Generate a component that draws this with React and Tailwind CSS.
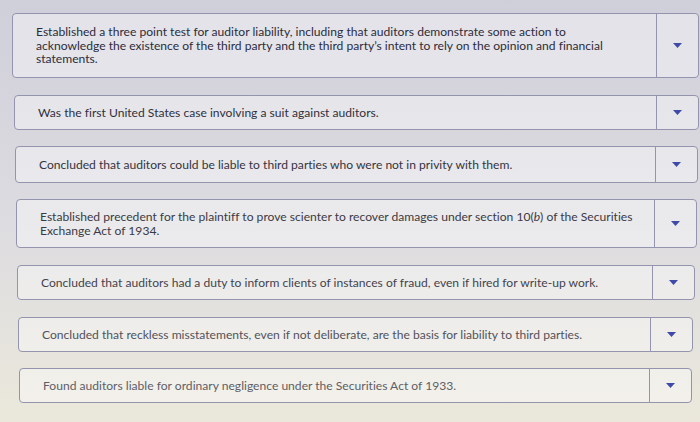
import React from 'react';

const rows = [
  {
    lines: [
      'Established a three point test for auditor liability, including that auditors demonstrate some action to',
      'acknowledge the existence of the third party and the third party\u2019s intent to rely on the opinion and financial',
      'statements.',
    ],
    box: 'ml-[12px] mr-[1px] h-[65px] mt-[13px]',
    tone: 'text-[#2c2c3b]',
  },
  { lines: ['Was the first United States case involving a suit against auditors.'], box: 'ml-[14px] mr-[1px] h-[35px] mt-[17px]', tone: 'text-[#30303d]' },
  { lines: ['Concluded that auditors could be liable to third parties who were not in privity with them.'], box: 'ml-[15px] mr-[2px] h-[37px] mt-[16px]', tone: 'text-[#343440]' },
  {
    lines: [
      <>Established precedent for the plaintiff to prove scienter to recover damages under section 10(<i>b</i>) of the Securities</>,
      'Exchange Act of 1934.',
    ],
    box: 'ml-[16px] mr-[3px] h-[49px] mt-[16px]',
    tone: 'text-[#3a3a44]',
  },
  { lines: ['Concluded that auditors had a duty to inform clients of instances of fraud, even if hired for write-up work.'], box: 'ml-[17px] mr-[5px] h-[35px] mt-[17px]', tone: 'text-[#43434c]' },
  { lines: ['Concluded that reckless misstatements, even if not deliberate, are the basis for liability to third parties.'], box: 'ml-[18px] mr-[7px] h-[35px] mt-[17px]', tone: 'text-[#52525a]' },
  { lines: ['Found auditors liable for ordinary negligence under the Securities Act of 1933.'], box: 'ml-[19px] mr-[8px] h-[35px] mt-[16px]', tone: 'text-[#5e5e66]' },
];

const Caret = () => (
  <svg width="9" height="5" viewBox="0 0 9 5">
    <path d="M0 0 H9 L4.5 5 Z" fill="#3f4aa8" />
  </svg>
);

export default function App() {
  return (
    <div
      className="w-[700px] h-[422px] overflow-hidden bg-gradient-to-b from-[#cfcfda] via-[#dcdbe0] to-[#ebe8db] [font-variant-ligatures:none]"
      style={{ fontFamily: 'Lato, "Open Sans", sans-serif' }}
    >
      {rows.map((row, i) => (
        <div
          key={i}
          className={`flex rounded-[4px] border border-[#9494ae] bg-white/40 ${row.box}`}
        >
          <div className={`flex-1 flex flex-col justify-center pl-[23px] pr-3 text-[12.1px] leading-[13.5px] ${row.tone}`}>
            {row.lines.map((l, j) => (
              <div key={j} className="whitespace-nowrap">{l}</div>
            ))}
          </div>
          <div className="w-[42px] shrink-0 border-l border-[#9494ae] flex items-center justify-center">
            <Caret />
          </div>
        </div>
      ))}
    </div>
  );
}
